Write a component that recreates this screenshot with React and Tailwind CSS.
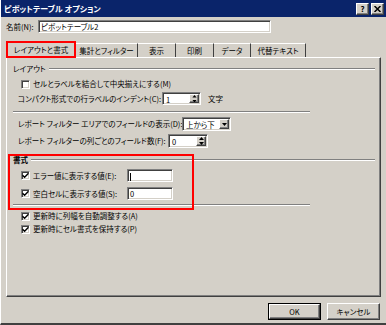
import React from 'react';

const font = "font-['Noto_Sans_CJK_JP','Noto_Sans_CJK_SC',sans-serif] [font-feature-settings:'palt']";

const sunken =
  'bg-white border border-t-[#808080] border-l-[#808080] border-b-white border-r-white shadow-[inset_1px_1px_0_#404040,inset_-1px_-1px_0_#d4d0c8]';

const raised =
  'bg-[#d4d0c8] border border-t-white border-l-white border-b-[#404040] border-r-[#404040] shadow-[inset_-1px_-1px_0_#808080]';

const Check = ({ checked }) => (
  <div className={`w-[9px] h-[9px] flex items-center justify-center ${sunken}`}>
    {checked && (
      <svg width="7" height="7" viewBox="0 0 7 7">
        <path d="M0.5 3.2 L2.6 5.3 L6.5 1.2" stroke="#000" strokeWidth="1.4" fill="none" />
      </svg>
    )}
  </div>
);

const Spin = () => (
  <div className={`${raised} w-[10px] h-full flex flex-col items-center justify-center gap-[2px]`}>
    <svg width="5" height="3" viewBox="0 0 5 3"><path d="M2.5 0 L5 3 L0 3 Z" fill="#000" /></svg>
    <svg width="5" height="3" viewBox="0 0 5 3"><path d="M0 0 L5 0 L2.5 3 Z" fill="#000" /></svg>
  </div>
);

const SpinBox = ({ value, width }) => (
  <div className={`${sunken} ${width} h-full flex items-stretch p-[1px]`}>
    <span className="flex-1 pl-[2px] leading-[11px]">{value}</span>
    <Spin />
  </div>
);

const Etched = ({ className = '' }) => (
  <div className={`h-[2px] border-t border-t-[#808080] border-b border-b-white ${className}`} />
);

const Group = ({ label, className = '' }) => (
  <div className={`flex items-center h-[12px] pl-[6px] pr-[5px] ${className}`}>
    <span>{label}</span>
    <Etched className="flex-1 ml-[3px]" />
  </div>
);

const CheckRow = ({ label, className = '' }) => (
  <div className={`flex items-center h-[12px] pl-[14px] gap-[3px] ${className}`}>
    <Check checked={label.checked} />
    <span>{label.text}</span>
  </div>
);

const tabs = [
  { t: '集計とフィルター', w: 'w-[62px]' },
  { t: '表示', w: 'w-[38px]' },
  { t: '印刷', w: 'w-[38px]' },
  { t: 'データ', w: 'w-[37px]' },
  { t: '代替テキスト', w: 'w-[55px]' },
];

export default function App() {
  return (
    <div className={`${font} text-[7.5px] leading-[12px] text-black whitespace-nowrap w-[386px] h-[325px] bg-[#d4d0c8] border-l border-l-white border-b-2 border-b-[#404040] overflow-hidden`}>
      <div className="h-[17px] bg-[#0a246a] flex items-center justify-between pl-[3px] pr-[2px]">
        <span className="text-white font-bold text-[8px]">ピボットテーブル オプション</span>
        <div className="flex gap-[2px]">
          <div className={`${raised} w-[13px] h-[12px] flex items-center justify-center font-bold text-[8px] leading-none`}>?</div>
          <div className={`${raised} w-[13px] h-[12px] flex items-center justify-center`}>
            <svg width="7" height="6" viewBox="0 0 7 6">
              <path d="M0.5 0 L6.5 6 M6.5 0 L0.5 6" stroke="#000" strokeWidth="1.5" />
            </svg>
          </div>
        </div>
      </div>

      <div className="flex items-center h-[13px] mt-[3px] pl-[5px]">
        <span className="w-[32px]">名前(N):</span>
        <div className={`${sunken} w-[233px] h-[13px] pl-[2px] leading-[11px]`}>ピボットテーブル2</div>
      </div>

      <div className="flex items-end h-[17px] mt-[7px] pl-[5px] relative z-10">
        <div className="w-[70px] h-[17px] border-2 border-[#f00] bg-[#d4d0c8] flex items-center justify-center -mb-[1px]">
          レイアウトと書式
        </div>
        {tabs.map((tab) => (
          <div
            key={tab.t}
            className={`${tab.w} h-[14px] border-t border-t-white border-r border-r-[#404040] flex items-center justify-center pt-[1px]`}
          >
            {tab.t}
          </div>
        ))}
      </div>

      <div className="ml-[5px] w-[375px] h-[240px] border border-t-white border-l-white border-b-[#404040] border-r-[#404040] shadow-[inset_-1px_-1px_0_#808080] relative">
        <Group label="レイアウト" className="mt-[5px]" />
        <CheckRow className="mt-[3px]" label={{ text: 'セルとラベルを結合して中央揃えにする(M)', checked: false }} />
        <div className="flex items-center h-[13px] mt-[2px] pl-[11px]">
          <span className="w-[144px]">コンパクト形式での行ラベルのインデント(C):</span>
          <SpinBox value="1" width="w-[39px]" />
          <span className="ml-[7px]">文字</span>
        </div>
        <Etched className="mt-[6px] ml-[6px] w-[297px]" />
        <div className="flex items-center h-[14px] mt-[4px] pl-[11px]">
          <span className="w-[164px]">レポート フィルター エリアでのフィールドの表示(D):</span>
          <div className={`${sunken} w-[49px] h-full flex items-stretch p-[1px]`}>
            <span className="flex-1 pl-[2px] leading-[12px]">上から下</span>
            <div className={`${raised} w-[10px] flex items-center justify-center`}>
              <svg width="5" height="3" viewBox="0 0 5 3"><path d="M0 0 L5 0 L2.5 3 Z" fill="#000" /></svg>
            </div>
          </div>
        </div>
        <div className="flex items-center h-[14px] mt-[3px] pl-[11px]">
          <span className="w-[150px]">レポート フィルターの列ごとのフィールド数(F):</span>
          <SpinBox value="0" width="w-[40px]" />
        </div>

        <Group label="書式" className="mt-[6px] font-bold" />
        <div className="flex items-center h-[13px] mt-[3px] pl-[14px]">
          <div className="flex items-center gap-[3px] w-[106px]">
            <Check checked />
            <span>エラー値に表示する値(E):</span>
          </div>
          <div className={`${sunken} w-[46px] h-full pl-[2px] leading-[11px]`}>
            <span className="inline-block w-[1px] h-[8px] bg-black align-middle" />
          </div>
        </div>
        <div className="flex items-center h-[13px] mt-[5px] pl-[14px]">
          <div className="flex items-center gap-[3px] w-[106px]">
            <Check checked />
            <span>空白セルに表示する値(S):</span>
          </div>
          <div className={`${sunken} w-[46px] h-full pl-[2px] leading-[11px]`}>0</div>
        </div>
        <Etched className="mt-[4px] ml-[6px] w-[297px]" />
        <CheckRow className="mt-[4px]" label={{ text: '更新時に列幅を自動調整する(A)', checked: true }} />
        <CheckRow className="mt-[1px]" label={{ text: '更新時にセル書式を保持する(P)', checked: true }} />

        <div className="absolute left-[1px] top-[96px] w-[186px] h-[56px] border-2 border-[#f00] pointer-events-none" />
      </div>

      <div className="flex justify-end gap-[6px] mt-[6px] pr-[6px]">
        <div className="w-[53px] h-[17px] border border-black">
          <div className={`${raised} w-full h-full flex items-center justify-center`}>OK</div>
        </div>
        <div className={`${raised} w-[53px] h-[17px] flex items-center justify-center`}>キャンセル</div>
      </div>
    </div>
  );
}
